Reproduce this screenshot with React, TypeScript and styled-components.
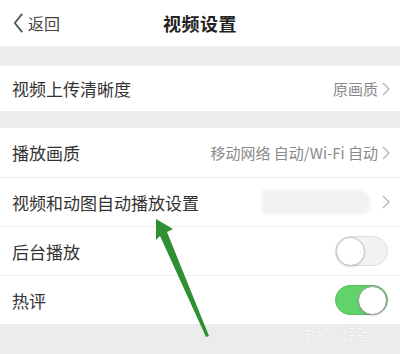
import * as React from 'react';
import styled, { createGlobalStyle } from 'styled-components';

const GlobalStyle = createGlobalStyle`
  html, body {
    margin: 0;
    padding: 0;
    background: #ececec;
  }
  body {
    font-family: "Noto Sans CJK SC", "Noto Sans", sans-serif;
  }
`;

type Row = {
  label: string;
  value?: string;
  smudge?: boolean;
  toggle?: boolean;
  on?: boolean;
};

const groups: Row[][] = [
  [{ label: '视频上传清晰度', value: '原画质' }],
  [
    { label: '播放画质', value: '移动网络 自动/Wi-Fi 自动' },
    { label: '视频和动图自动播放设置', smudge: true },
    { label: '后台播放', toggle: true, on: false },
    { label: '热评', toggle: true, on: true },
  ],
];

function Chevron() {
  return (
    <ChevronSvg viewBox="0 0 8 14" width="8" height="14">
      <path d="M1 1 L7 7 L1 13" fill="none" stroke="#b5b5b5" strokeWidth="1.3" />
    </ChevronSvg>
  );
}

export default function App() {
  return (
    <Screen>
      <GlobalStyle />
      <NavBar>
        <Back>
          <svg viewBox="0 0 12 22" width="11" height="20">
            <path d="M10 1 L2 11 L10 21" fill="none" stroke="#555" strokeWidth="2" />
          </svg>
          <span>返回</span>
        </Back>
        <NavTitle>视频设置</NavTitle>
      </NavBar>

      {groups.map((group, gi) => (
        <Group key={gi} $first={gi === 0}>
          {group.map((row, ri) => (
            <Item key={row.label} $tall={gi === 1} $divider={ri > 0}>
              <Label>{row.label}</Label>
              {row.toggle ? (
                <Switch $on={!!row.on}>
                  <Knob $on={!!row.on} />
                </Switch>
              ) : (
                <Right>
                  {row.value && <Value>{row.value}</Value>}
                  {row.smudge && <Smudge />}
                  <Chevron />
                </Right>
              )}
            </Item>
          ))}
        </Group>
      ))}

      <Arrow viewBox="0 0 400 354" width="400" height="354">
        <polygon
          points="156,219 173,229 167,232 209,336 206,337 160,236 156,240"
          fill="#2f8f33"
        />
      </Arrow>
      <Watermark>
        Bai<Paw>du</Paw>经验
      </Watermark>
    </Screen>
  );
}

const Screen = styled.div`
  position: relative;
  width: 400px;
  height: 354px;
  overflow: hidden;
  background: #ececec;
`;

const NavBar = styled.div`
  height: 46px;
  background: #fff;
  display: flex;
  align-items: center;
  justify-content: center;
  position: relative;
`;

const Back = styled.div`
  position: absolute;
  left: 13px;
  top: 0;
  bottom: 0;
  display: flex;
  align-items: center;
  gap: 4px;
  font-size: 16px;
  color: #444;
`;

const NavTitle = styled.div`
  font-size: 18px;
  font-weight: 700;
  color: #222;
  letter-spacing: 0.5px;
`;

const Group = styled.div<{ $first: boolean }>`
  background: #fff;
  margin-top: ${(p) => (p.$first ? '20px' : '17px')};
`;

const Item = styled.div<{ $tall: boolean; $divider: boolean }>`
  height: ${(p) => (p.$tall ? '49px' : '45px')};
  display: flex;
  align-items: center;
  justify-content: space-between;
  padding: 0 10px 0 12px;
  box-sizing: border-box;
  border-top: ${(p) => (p.$divider ? '1px solid #ededed' : 'none')};
`;

const Label = styled.div`
  font-size: 17px;
  color: #333;
`;

const Right = styled.div`
  display: flex;
  align-items: center;
  gap: 4px;
`;

const Value = styled.div`
  font-size: 15px;
  color: #8a8a8a;
`;

const ChevronSvg = styled.svg`
  display: block;
`;

const Smudge = styled.div`
  width: 108px;
  height: 24px;
  margin-right: 8px;
  background: #f1f1f1;
  border-radius: 3px 12px 8px 3px;
  filter: blur(1.5px);
`;

const Switch = styled.div<{ $on: boolean }>`
  width: 53px;
  height: 30px;
  box-sizing: border-box;
  border-radius: 15px;
  background: ${(p) => (p.$on ? '#62d26a' : '#f2f2f2')};
  border: 1px solid ${(p) => (p.$on ? '#5bbd62' : '#dedede')};
  margin-right: 2px;
  display: flex;
  align-items: center;
  justify-content: ${(p) => (p.$on ? 'flex-end' : 'flex-start')};
`;

const Knob = styled.div<{ $on: boolean }>`
  width: 29px;
  height: 29px;
  border-radius: 50%;
  background: #fff;
  box-sizing: border-box;
  border: 1px solid ${(p) => (p.$on ? '#9a9a9a' : '#c4c4c4')};
  box-shadow: 0 1px 2px rgba(0, 0, 0, 0.15);
`;

const Arrow = styled.svg`
  position: absolute;
  left: 0;
  top: 0;
  pointer-events: none;
`;

const Watermark = styled.div`
  position: absolute;
  left: 305px;
  top: 323px;
  font-family: "Liberation Sans", "Noto Sans CJK SC", sans-serif;
  font-size: 15px;
  color: rgba(255, 255, 255, 0.9);
  text-shadow: 0 0 1px rgba(0, 0, 0, 0.15);
`;

const Paw = styled.span`
  font-size: 13px;
`;
